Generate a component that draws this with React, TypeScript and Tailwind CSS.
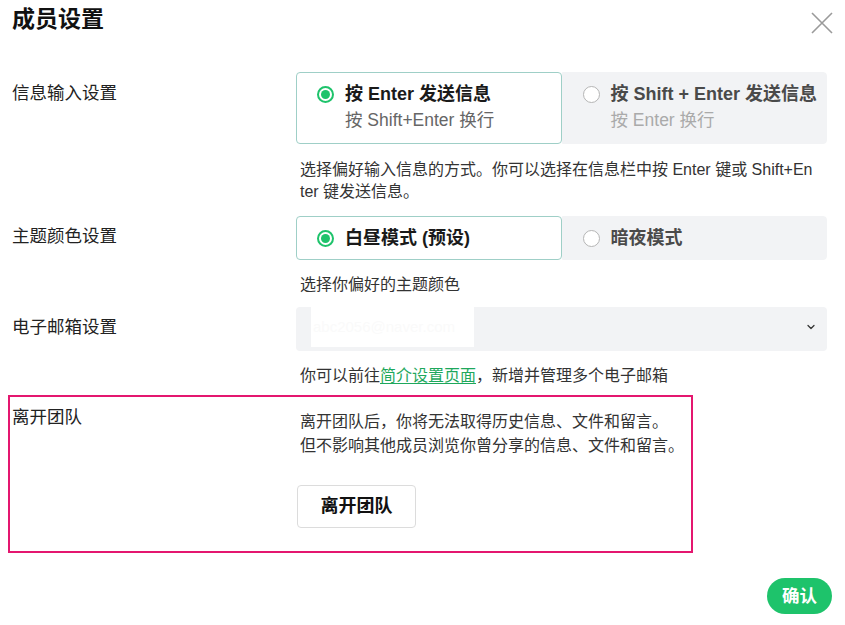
import React from "react";
import { ChevronDown } from "lucide-react";

const font = { fontFamily: '"Liberation Sans", "Noto Sans CJK SC", sans-serif' };

const Radio = ({ checked }: { checked: boolean }) =>
  checked ? (
    <span className="flex h-[17px] w-[17px] shrink-0 items-center justify-center rounded-full border-2 border-[#1ec36b]">
      <span className="h-[9px] w-[9px] rounded-full bg-[#1ec36b]" />
    </span>
  ) : (
    <span className="h-[17px] w-[17px] shrink-0 rounded-full border border-[#b5b5b5] bg-white" />
  );

interface OptionProps {
  checked: boolean;
  title: string;
  sub?: string;
}

const Option = ({ checked, title, sub }: OptionProps) => (
  <div
    className={
      checked
        ? "flex-1 rounded-[4px] border border-[#9fcfc7] bg-white pl-[20px]"
        : "flex-1 rounded-r-[4px] border border-[#f2f3f5] bg-[#f2f3f5] pl-[20px]"
    }
  >
    <div className={sub ? "pt-[9px] pb-[11px]" : "py-[9px]"}>
      <div className="flex items-center gap-[11px]">
        <Radio checked={checked} />
        <span
          className={
            checked
              ? "text-[18px] leading-[24px] font-bold text-[#1a1a1a]"
              : "text-[18px] leading-[24px] font-bold text-[#4a4a4a]"
          }
        >
          {title}
        </span>
      </div>
      {sub && (
        <div
          className={
            checked
              ? "mt-[2px] pl-[28px] text-[17.5px] leading-[24px] text-[#666]"
              : "mt-[2px] pl-[28px] text-[17.5px] leading-[24px] text-[#aaa]"
          }
        >
          {sub}
        </div>
      )}
    </div>
  </div>
);

const Label = ({ children, pt }: { children: React.ReactNode; pt: string }) => (
  <div className={`w-[284px] shrink-0 text-[17.5px] leading-[24px] text-[#222] ${pt}`}>{children}</div>
);

export default function App() {
  return (
    <div className="relative h-[625px] w-[845px] bg-white text-[#222]" style={font}>
      <div className="flex items-start justify-between pl-[12px] pr-[12px] pt-[3px]">
        <h1 className="text-[23px] leading-[32px] font-bold text-[#111]">成员设置</h1>
        <svg width="24" height="24" viewBox="0 0 24 24" className="mt-[8px] mr-[-1px]">
          <path d="M2 2 L22 22 M22 2 L2 22" stroke="#9a9a9a" strokeWidth="1.6" fill="none" />
        </svg>
      </div>

      <div className="pl-[12px] pr-[18px]">
        {/* 信息输入设置 */}
        <div className="mt-[37px] flex">
          <Label pt="pt-[9px]">信息输入设置</Label>
          <div className="flex-1">
            <div className="flex">
              <Option checked title="按 Enter 发送信息" sub="按 Shift+Enter 换行" />
              <Option checked={false} title="按 Shift + Enter 发送信息" sub="按 Enter 换行" />
            </div>
            <p className="mt-[15px] pl-[4px] pr-[13px] text-[16px] leading-[22px] text-[#333] break-all">
              选择偏好输入信息的方式。你可以选择在信息栏中按 Enter 键或 Shift+Enter 键发送信息。
            </p>
          </div>
        </div>

        {/* 主题颜色设置 */}
        <div className="mt-[13px] flex">
          <Label pt="pt-[8px]">主题颜色设置</Label>
          <div className="flex-1">
            <div className="flex">
              <Option checked title="白昼模式 (预设)" />
              <Option checked={false} title="暗夜模式" />
            </div>
            <p className="mt-[14px] pl-[4px] text-[16px] leading-[22px] text-[#333]">选择你偏好的主题颜色</p>
          </div>
        </div>

        {/* 电子邮箱设置 */}
        <div className="mt-[11px] flex">
          <Label pt="pt-[8px]">电子邮箱设置</Label>
          <div className="flex-1">
            <div className="flex h-[44px] items-start justify-between rounded-[4px] bg-[#f2f3f5] pl-[15px] pr-[10px]">
              <div className="flex h-[40px] w-[163px] items-center bg-white pl-[2px] text-[15px] text-[#fafafa]">
                abc2056@naver.com
              </div>
              <ChevronDown size={12} strokeWidth={2.5} className="mt-[14px] text-[#333]" />
            </div>
            <p className="mt-[14px] pl-[4px] text-[16px] leading-[22px] text-[#333]">
              你可以前往
              <span className="text-[#1ea85c] underline underline-offset-2">简介设置页面</span>
              ，新增并管理多个电子邮箱
            </p>
          </div>
        </div>
      </div>

      {/* 离开团队 */}
      <div className="ml-[8px] mt-[8px] flex w-[685px] border-2 border-[#e4176f] pl-[2px] pt-[8px] pb-[23px]">
        <div className="w-[286px] shrink-0 text-[17.5px] leading-[24px] text-[#222]">离开团队</div>
        <div className="flex-1">
          <p className="mt-[5px] pl-[2px] text-[16px] leading-[24px] text-[#333]">
            离开团队后，你将无法取得历史信息、文件和留言。
            <br />
            但不影响其他成员浏览你曾分享的信息、文件和留言。
          </p>
          <button className="mt-[27px] ml-[-1px] h-[43px] w-[119px] rounded-[4px] border border-[#dcdcdc] bg-white text-[18px] font-bold text-[#111]">
            离开团队
          </button>
        </div>
      </div>

      <div className="mt-[25px] flex justify-end pr-[13px]">
        <button className="h-[36px] w-[65px] rounded-full bg-[#1ec36b] text-[17.5px] font-bold text-white">确认</button>
      </div>
    </div>
  );
}
